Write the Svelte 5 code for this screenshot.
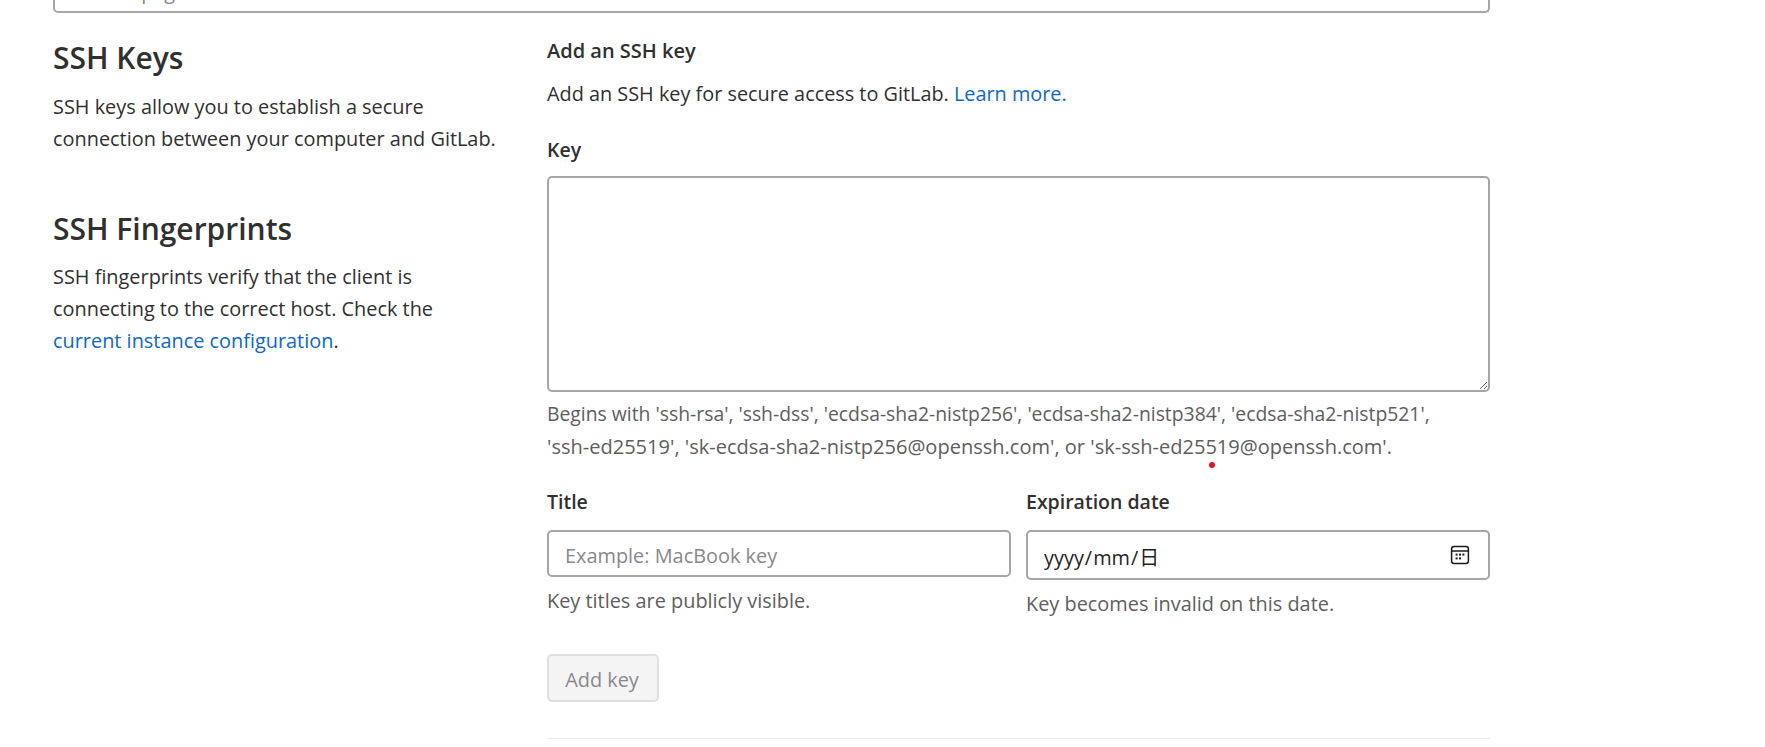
<script>
  const algoFirst = "Begins with 'ssh-rsa', 'ssh-dss', 'ecdsa-sha2-nistp256', 'ecdsa-sha2-nistp384', 'ecdsa-sha2-nistp521',";
  const algoSecond = "'ssh-ed25519', 'sk-ecdsa-sha2-nistp256@openssh.com', or 'sk-ssh-ed25519@openssh.com'.";
</script>

<div class="page">
  <div class="clipped-field"><span class="clipped-text">Search page</span></div>
  <div class="columns">
    <aside class="side">
      <section class="intro">
        <h2>SSH Keys</h2>
        <p>SSH keys allow you to establish a secure<br />connection between your computer and GitLab.</p>
      </section>
      <section class="intro second">
        <h2>SSH Fingerprints</h2>
        <p>SSH fingerprints verify that the client is<br />connecting to the correct host. Check the<br /><a href="#top">current instance configuration</a>.</p>
      </section>
    </aside>
    <main class="content">
      <h5>Add an SSH key</h5>
      <p class="lead">Add an SSH key for secure access to GitLab. <a href="#top">Learn more.</a></p>
      <label class="label" for="key">Key</label>
      <textarea id="key"></textarea>
      <div class="algo">
        <p class="hint algo-line first">{algoFirst}</p>
        <p class="hint algo-line">{algoSecond}</p>
        <i class="dot"></i>
      </div>
      <div class="row">
        <div class="col">
          <label class="label" for="title">Title</label>
          <input id="title" class="title-input" type="text" placeholder="Example: MacBook key" />
          <p class="hint">Key titles are publicly visible.</p>
        </div>
        <div class="col">
          <label class="label" for="exp">Expiration date</label>
          <div id="exp" class="date-input">
            <span class="date-value">yyyy<span class="sep">/</span>mm<span class="sep">/</span>日</span>
            <svg width="20" height="20" viewBox="0 0 20 20" fill="none" aria-hidden="true">
              <rect x="1.6" y="1.6" width="16.8" height="16.8" rx="2.4" stroke="#1a1a1a" stroke-width="1.5"/>
              <path d="M2 6h16" stroke="#1a1a1a" stroke-width="1.5"/>
              <g fill="#1a1a1a">
                <rect x="5.6" y="8.6" width="2" height="2"/><rect x="9" y="8.6" width="2" height="2"/><rect x="12.4" y="8.6" width="2" height="2"/>
                <rect x="5.6" y="12.4" width="2" height="2"/><rect x="9" y="12.4" width="2" height="2"/>
              </g>
            </svg>
          </div>
          <p class="hint">Key becomes invalid on this date.</p>
        </div>
      </div>
      <button type="button" disabled>Add key</button>
      <hr />
    </main>
  </div>
</div>

<style>
  :global(body) {
    margin: 0;
    background: #fff;
    overflow: hidden;
  }
  .page {
    width: 1765px;
    height: 747px;
    overflow: hidden;
    padding-left: 53px;
    box-sizing: border-box;
    font-family: "Open Sans", "Noto Sans", sans-serif;
    font-size: 19.9px;
    color: #303030;
  }
  .clipped-field {
    width: 1437px;
    height: 13px;
    box-sizing: border-box;
    border: 2px solid #a6a6a6;
    border-top: 0;
    border-radius: 0 0 5px 5px;
    overflow: hidden;
    position: relative;
  }
  .clipped-text {
    position: absolute;
    left: 18px;
    top: -22px;
    color: #89888d;
  }
  .columns {
    display: flex;
    width: 1437px;
  }
  .side {
    width: 494px;
    flex: none;
  }
  .content {
    flex: 1;
    padding-top: 25px;
    min-width: 0;
  }
  h2 {
    margin: 0;
    font-size: 30px;
    line-height: 40px;
    font-weight: 600;
    color: #303030;
  }
  .intro {
    padding-top: 25px;
  }
  .second {
    padding-top: 54px;
  }
  .intro p {
    margin: 13px 0 0;
    line-height: 32px;
    white-space: nowrap;
  }
  .second p {
    margin-top: 12px;
  }
  a {
    color: #1068bf;
    text-decoration: none;
  }
  h5 {
    margin: 0;
    font-size: 20px;
    line-height: 26px;
    font-weight: 600;
  }
  .lead {
    margin: 17px 0 0;
    font-size: 19.85px;
    line-height: 26px;
  }
  .label {
    display: block;
    font-size: 19.5px;
    font-weight: 600;
    line-height: 26px;
  }
  .lead + .label {
    margin-top: 30px;
  }
  textarea {
    display: block;
    margin: 13px 0 0;
    width: 100%;
    height: 216px;
    box-sizing: border-box;
    border: 2px solid #a6a6a6;
    border-radius: 5px;
    background: #fff;
    outline: none;
  }
  .hint {
    margin: 0;
    color: #5e5e5e;
    line-height: 26px;
  }
  .algo {
    margin-top: 6px;
    position: relative;
  }
  .algo-line {
    font-size: 20.05px;
    line-height: 32.5px;
    white-space: nowrap;
  }
  .algo-line.first {
    font-size: 19.35px;
  }
  .dot {
    position: absolute;
    left: 662px;
    top: 64px;
    width: 6px;
    height: 6px;
    border-radius: 50%;
    background: #e8141c;
  }
  .row {
    display: flex;
    gap: 15px;
    margin-top: 26px;
  }
  .col {
    flex: 1;
    min-width: 0;
  }
  .col .label {
    margin-bottom: 15px;
  }
  .title-input {
    display: block;
    width: 100%;
    height: 47px;
    box-sizing: border-box;
    padding: 3px 16px 0;
    border: 2px solid #a6a6a6;
    border-radius: 5px;
    font: inherit;
    color: #303030;
    outline: none;
  }
  .title-input::placeholder {
    color: #89888d;
    opacity: 1;
  }
  .date-input {
    display: flex;
    align-items: center;
    justify-content: space-between;
    height: 50px;
    box-sizing: border-box;
    padding: 0 18px 0 16px;
    border: 2px solid #a6a6a6;
    border-radius: 5px;
    color: #1f1f1f;
  }
  .date-value {
    font-family: "Open Sans", "Noto Sans CJK JP", sans-serif;
    padding-top: 2px;
  }
  .sep {
    margin: 0 1px;
  }
  .col .hint {
    margin-top: 11px;
  }
  button {
    display: block;
    margin-top: 37px;
    width: 112px;
    height: 48px;
    box-sizing: border-box;
    border: 2px solid #e0e0e2;
    border-radius: 5px;
    background: #f4f4f4;
    color: #89888d;
    font: inherit;
    padding: 2px 2px 0 0;
  }
  hr {
    margin: 36px 0 0;
    border: 0;
    border-top: 1px solid #ececef;
  }
</style>
